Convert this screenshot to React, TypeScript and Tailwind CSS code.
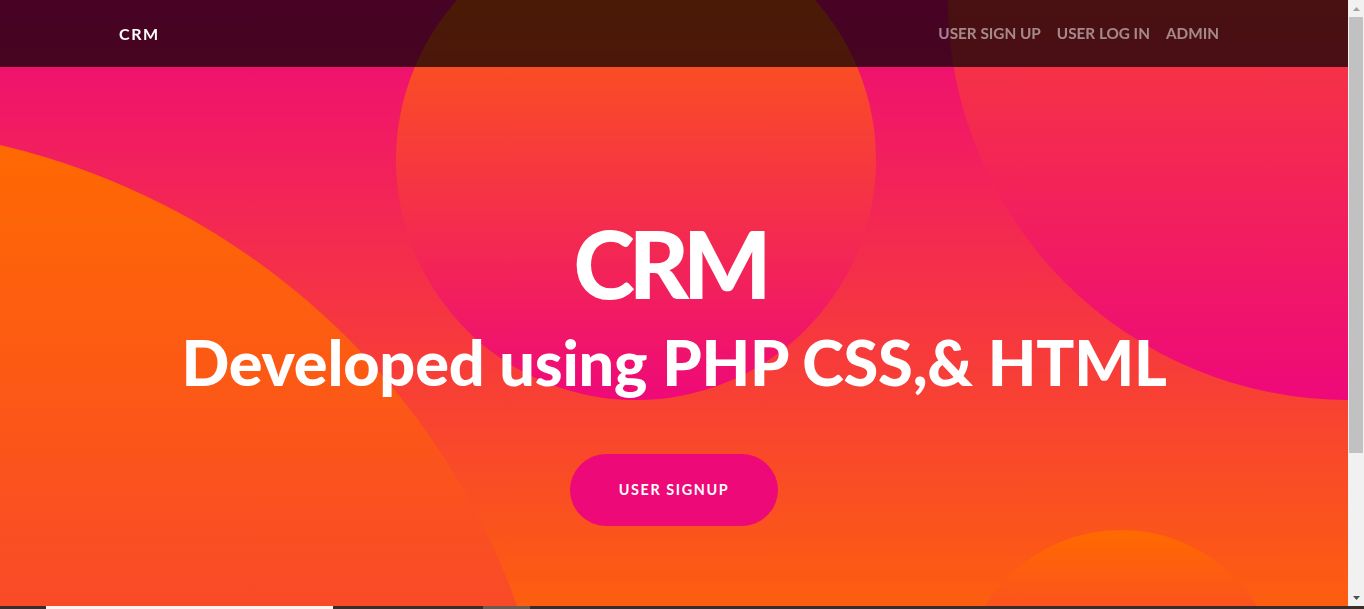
const circle =
  "absolute rounded-full bg-[linear-gradient(to_bottom,#ff6a00,#ee0979)]";

function FakeScrollbar() {
  return (
    <div className="fixed right-0 top-0 z-30 flex h-[606px] w-[16px] flex-col bg-[#f1f1f1]">
      <div className="flex h-[17px] items-center justify-center">
        <svg width="7" height="4" viewBox="0 0 7 4">
          <path d="M3.5 0 L7 4 L0 4 Z" fill="#a3a3a3" />
        </svg>
      </div>
      <div className="mx-[1px] h-[436px] bg-[#c1c1c1]" />
      <div className="flex-1" />
      <div className="flex h-[17px] items-center justify-center">
        <svg width="7" height="4" viewBox="0 0 7 4">
          <path d="M0 0 L7 0 L3.5 4 Z" fill="#505050" />
        </svg>
      </div>
    </div>
  );
}

export default function App() {
  const links = ["User Sign Up", "User Log In", "Admin"];
  return (
    <div className="min-h-[780px] w-[1348px] font-['Lato',sans-serif]">
      <nav className="fixed left-0 top-0 z-20 h-[67px] w-[1348px] bg-black/70">
        <div className="mx-auto flex h-full w-[1140px] items-center justify-between px-[15px]">
          <a href="#" className="text-[16px] font-bold uppercase tracking-[0.1rem] text-white">
            CRM
          </a>
          <ul className="mr-[2px] flex">
            {links.map((l) => (
              <li key={l}>
                <a href="#" className="block px-2 text-[15.3px] font-bold uppercase text-white/50">
                  {l}
                </a>
              </li>
            ))}
          </ul>
        </div>
      </nav>

      <header className="relative h-[690px] overflow-hidden bg-[linear-gradient(to_top,#ff6a00,#ee0979)] pt-[208px] text-center">
        <div className="relative z-10">
          <h1 className="pr-[9px] text-[93px] font-black leading-[1.2] tracking-[-6px] text-white">
            CRM
          </h1>
          <h2 className="mt-[4px] text-[63px] font-black leading-[1.2] tracking-[-0.2px] text-white">
            Developed using PHP CSS,&amp; HTML
          </h2>
          <div className="mt-[55px] flex justify-center">
            <a
              href="#"
              className="rounded-full border border-[#ee0979] bg-[#ee0979] px-12 py-6 text-[14.4px] font-bold uppercase leading-[1.5] tracking-[0.1rem] text-white"
            >
              User Signup
            </a>
          </div>
        </div>
        <div className={`${circle} left-[-890px] top-[126px] h-[1450px] w-[1450px]`} />
        <div className={`${circle} right-[-400px] top-[-400px] h-[800px] w-[800px]`} />
        <div className={`${circle} bottom-[-160px] right-[5%] h-[320px] w-[320px]`} />
        <div className={`${circle} right-[35%] top-[-80px] h-[480px] w-[480px]`} />
      </header>

      <footer className="h-[90px] bg-black" />

      <FakeScrollbar />

      <div className="fixed inset-x-0 bottom-0 z-40 flex h-[3px] bg-[#3b2c2a]">
        <div className="ml-[46px] w-[287px] bg-[#fbf3ee]" />
        <div className="ml-[150px] w-[47px] bg-[#6e5a4e]" />
      </div>
    </div>
  );
}
